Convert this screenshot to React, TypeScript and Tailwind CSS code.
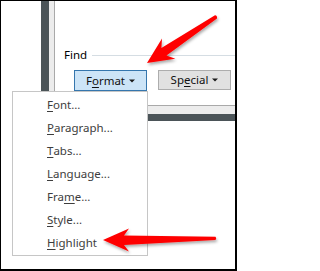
import { ReactNode } from 'react';

const menuItems: { pre: string; key: string; post: string }[] = [
  { pre: '', key: 'F', post: 'ont...' },
  { pre: '', key: 'P', post: 'aragraph...' },
  { pre: '', key: 'T', post: 'abs...' },
  { pre: '', key: 'L', post: 'anguage...' },
  { pre: 'Fra', key: 'm', post: 'e...' },
  { pre: '', key: 'S', post: 'tyle...' },
  { pre: '', key: 'H', post: 'ighlight' },
];

const Caret = () => (
  <svg width="6" height="4" viewBox="0 0 6 4" className="ml-[4px]">
    <path d="M0 0.5 H6 L3 3.5 Z" fill="#1a1a1a" />
  </svg>
);

const Key = ({ children }: { children: ReactNode }) => (
  <span className="underline decoration-1 underline-offset-[2px]">{children}</span>
);

export default function App() {
  return (
    <div
      className="relative h-[271px] w-[237px] overflow-hidden border-t border-l border-r-2 border-b-2 border-black bg-white text-[11.5px]"
      style={{ fontFamily: '"Noto Sans", "Open Sans", sans-serif' }}
    >
      {/* dialog behind the menu */}
      <div className="ml-[40px] h-[120px] border-l-8 border-b-[7px] border-[#4b5458] bg-[#ececec] pl-[5px] pb-[8px]">
        <div className="h-full border-l border-b border-[#a9a9a9] bg-white pt-[46px]">
          <div className="flex h-[16px] items-center pl-[9px] leading-[16px] text-black">
            <span>Find</span>
            <div className="ml-[5px] h-px flex-1 bg-[#d5dde3]" />
          </div>
          <div className="mt-[7px] flex gap-[11px] pl-[19px] text-[#111]">
            <button className="flex h-[21px] w-[73px] items-center justify-center border border-[#3576ad] bg-[#cce4f7]">
              F<Key>o</Key>rmat
              <Caret />
            </button>
            <button className="flex h-[20px] w-[73px] items-center justify-center border border-[#adadad] bg-[#e1e1e1]">
              Sp<Key>e</Key>cial
              <Caret />
            </button>
          </div>
        </div>
      </div>

      {/* dropdown menu */}
      <div className="absolute left-[11px] top-[90px] w-[136px] border border-[#c6c6c6] bg-white py-px text-[#3d3d3d]">
        {menuItems.map((item) => (
          <div key={item.pre + item.key + item.post} className="flex h-[23px] items-center pl-[34px]">
            {item.pre}
            <Key>{item.key}</Key>
            {item.post}
          </div>
        ))}
      </div>

      {/* red callout arrows */}
      <svg
        className="pointer-events-none absolute left-[-1px] top-[-1px]"
        width="237"
        height="271"
        viewBox="0 0 237 271"
      >
        <defs>
          <filter id="shadow" x="-20%" y="-20%" width="140%" height="160%">
            <feDropShadow dx="1" dy="2" stdDeviation="1.6" floodColor="#000" floodOpacity="0.35" />
          </filter>
        </defs>
        <g filter="url(#shadow)" fill="#fe0000">
          <path d="M147 63 L162 38.6 L161.4 48 L215 15.2 Q217.5 15.5 217 18.4 L166.5 55.4 L175.3 58.8 Z" />
          <path d="M103 240 L129 228.5 L124 235.6 L215.5 236.8 Q217 238.2 215.5 240 L124 245 L129 251.5 Z" />
        </g>
      </svg>
    </div>
  );
}
